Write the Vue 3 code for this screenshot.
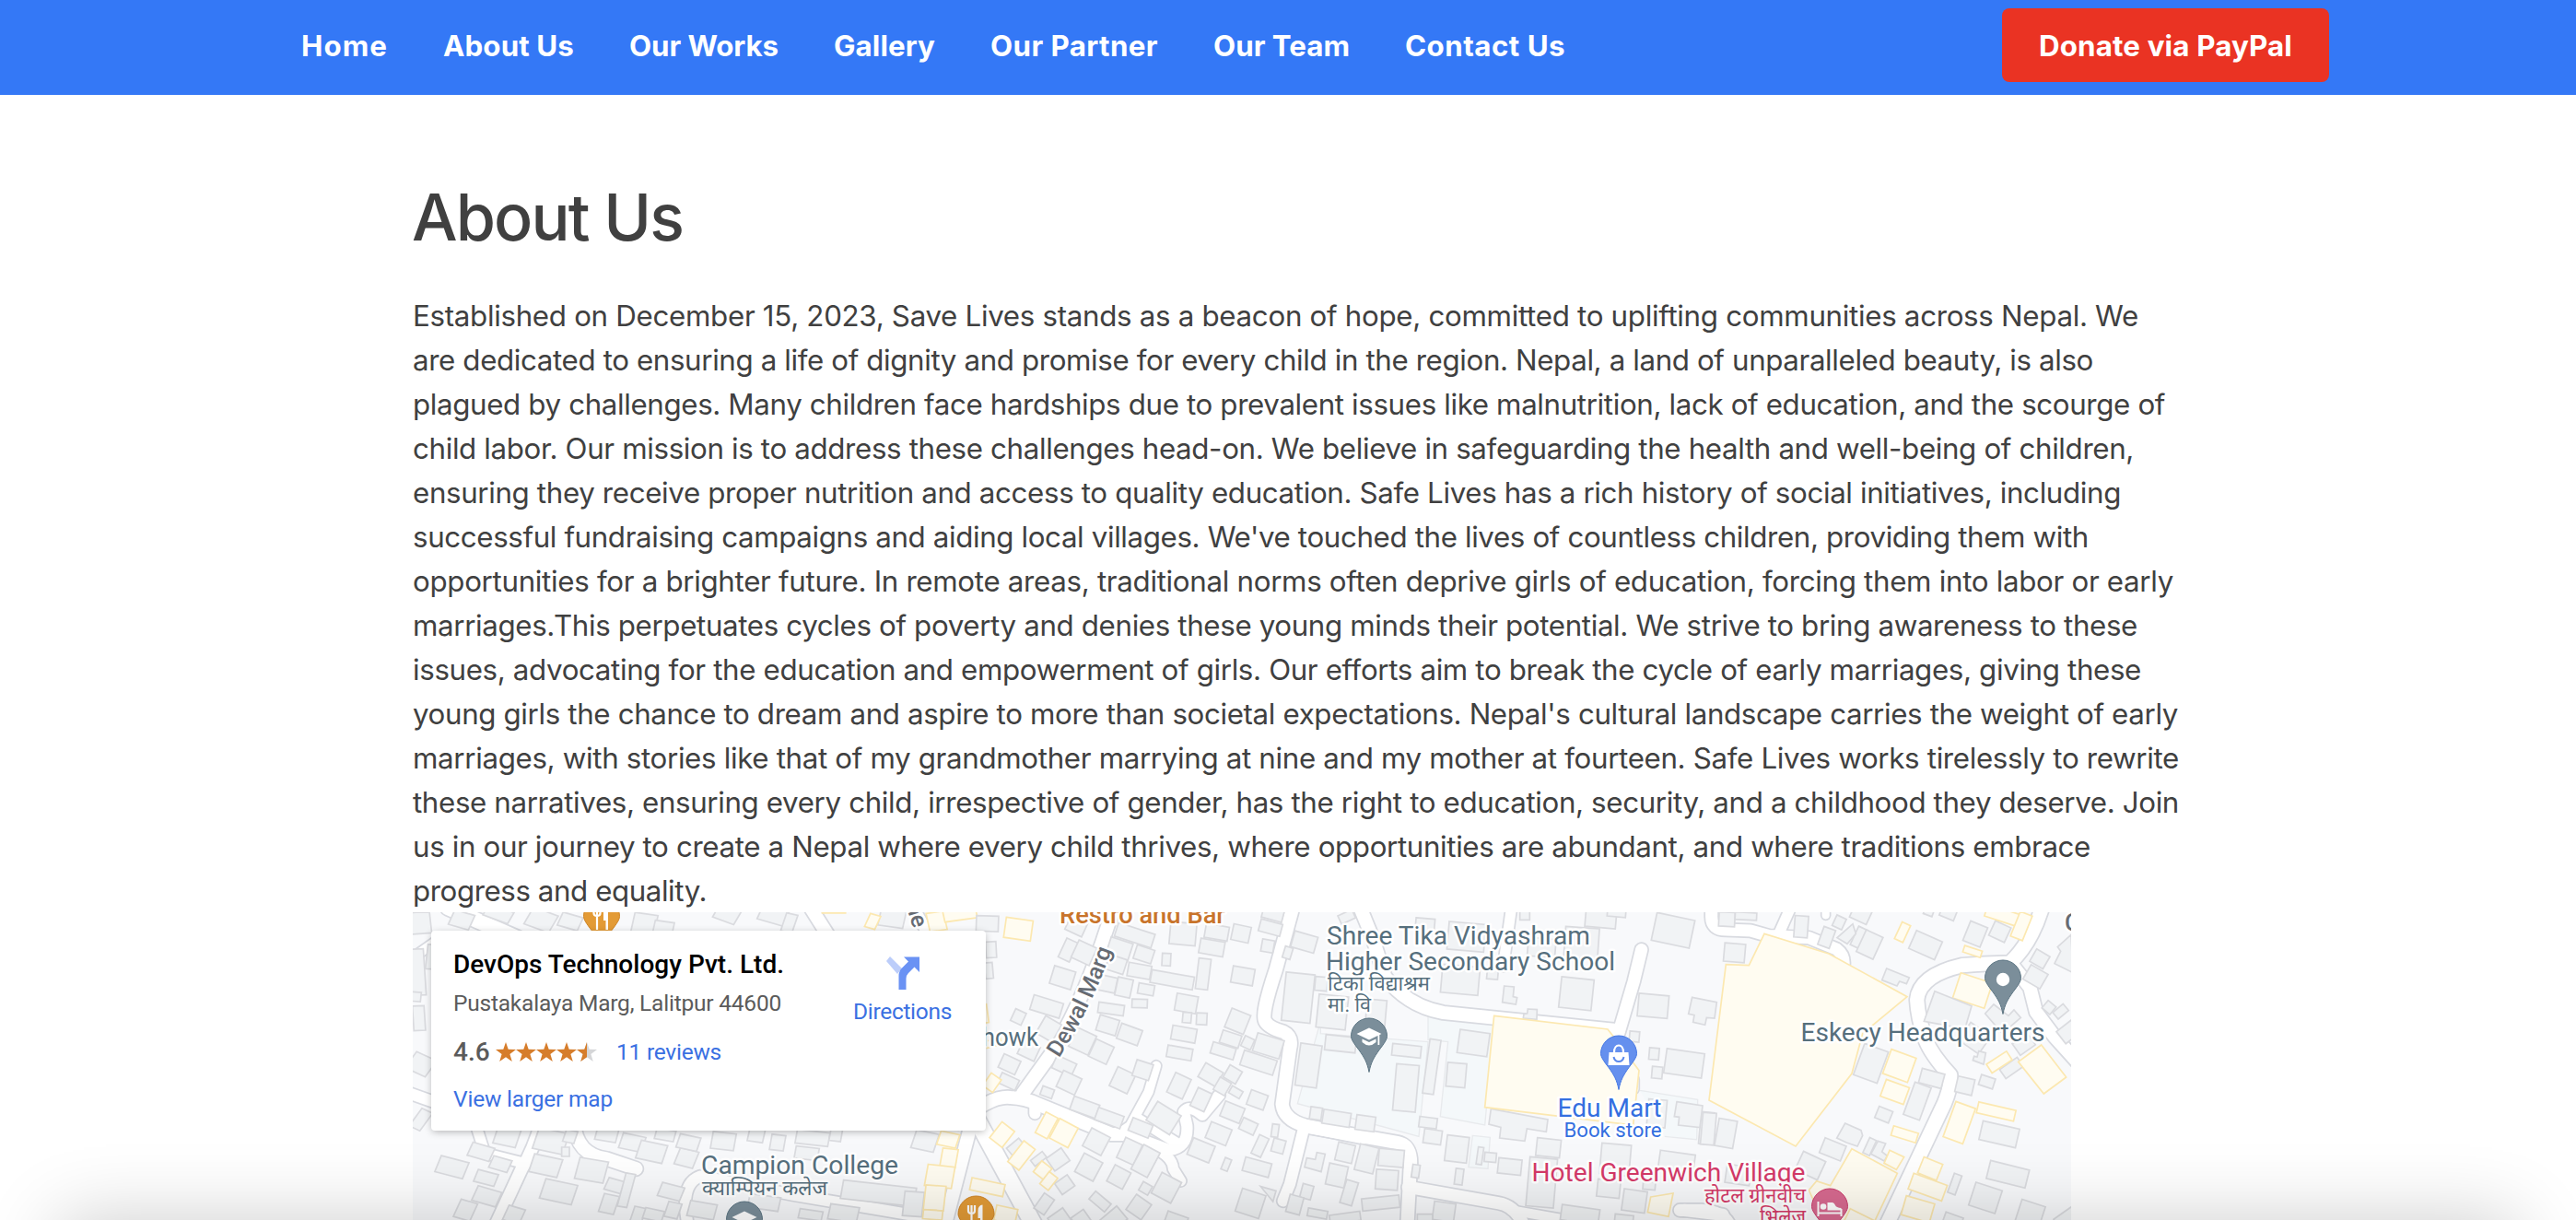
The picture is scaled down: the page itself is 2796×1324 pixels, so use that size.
<script setup>
// Spreads or tightens the letters of an element so that it fills a given width.
const vFit = {
  mounted(el, { value }) {
    const width = el.getBoundingClientRect().width
    el.style.letterSpacing = (value - width) / el.textContent.length + 'px'
  },
}

const nav = [
  ['Home', 94],
  ['About Us', 142],
  ['Our Works', 162],
  ['Gallery', 110],
  ['Our Partner', 182],
  ['Our Team', 148],
  ['Contact Us', 174],
]

const lines = [
  ['Established on December 15, 2023, Save Lives stands as a beacon of hope, committed to uplifting communities across Nepal. We', 1873],
  ['are dedicated to ensuring a life of dignity and promise for every child in the region. Nepal, a land of unparalleled beauty, is also', 1824],
  ['plagued by challenges. Many children face hardships due to prevalent issues like malnutrition, lack of education, and the scourge of', 1902],
  ['child labor. Our mission is to address these challenges head-on. We believe in safeguarding the health and well-being of children,', 1868],
  ['ensuring they receive proper nutrition and access to quality education. Safe Lives has a rich history of social initiatives, including', 1854],
  ["successful fundraising campaigns and aiding local villages. We've touched the lives of countless children, providing them with", 1819],
  ['opportunities for a brighter future. In remote areas, traditional norms often deprive girls of education, forcing them into labor or early', 1911],
  ['marriages.This perpetuates cycles of poverty and denies these young minds their potential. We strive to bring awareness to these', 1872],
  ['issues, advocating for the education and empowerment of girls. Our efforts aim to break the cycle of early marriages, giving these', 1876],
  ["young girls the chance to dream and aspire to more than societal expectations. Nepal's cultural landscape carries the weight of early", 1916],
  ['marriages, with stories like that of my grandmother marrying at nine and my mother at fourteen. Safe Lives works tirelessly to rewrite', 1917],
  ['these narratives, ensuring every child, irrespective of gender, has the right to education, security, and a childhood they deserve. Join', 1917],
  ['us in our journey to create a Nepal where every child thrives, where opportunities are abundant, and where traditions embrace', 1821],
  ['progress and equality.', 319],
]

// Map tiles. Roads are [width, path]; buildings are [cx, cy, w, h, angle].
const tiles = [
  {
    t: 'translate(440 985) scale(.42088 .33333)',
    roads: [
      [18, 'M110 0L290 100'], [16, 'M1040 -10L1090 90'], [15, 'M350 700Q330 790 300 850L230 1040'],
      [13, 'M180 700L205 800L300 830'], [16, 'M435 700Q440 805 520 818L595 850'], [14, 'M730 1040Q705 900 760 875L1000 935L1350 1010'],
      [16, 'M1460 700L1390 1040'], [14, 'M0 600L90 640'], [14, 'M1310 0L1350 90'], [12, 'M0 180L90 100'],
    ],
    grey: [
      [35, 50, 60, 70, -5], [145, 40, 55, 50, 20], [240, 20, 70, 40, 25], [350, 40, 70, 60, 25], [425, 45, 55, 45, 20], [615, 60, 60, 80, 10], [665, 70, 50, 50, 10], [830, 20, 60, 50, 25], [950, 20, 70, 60, 20], [990, 50, 30, 60, 15], [1255, 35, 65, 55, 10],
      [30, 210, 40, 150, -3], [25, 290, 30, 30, 5], [35, 360, 30, 80, -3], [40, 510, 60, 60, 30], [40, 690, 32, 66, 30], [65, 160, 20, 80, 5],
      [262, 745, 60, 60, 15], [195, 795, 60, 45, 20], [245, 835, 50, 40, 20], [120, 845, 75, 55, 18], [208, 880, 55, 40, 18], [375, 760, 80, 70, 15], [362, 840, 75, 60, 15], [413, 795, 20, 30, 0], [425, 745, 30, 40, 15], [480, 855, 75, 70, 12], [395, 925, 85, 65, 15], [210, 940, 65, 50, 20], [155, 985, 45, 60, 20], [280, 1000, 45, 50, 20], [540, 905, 45, 40, 20], [525, 965, 40, 60, 15], [570, 920, 25, 110, 12], [600, 1000, 30, 50, 15],
      [520, 735, 55, 50, 12], [585, 765, 60, 50, 15], [635, 795, 70, 60, 15], [670, 740, 50, 35, 12], [725, 815, 50, 55, 18], [730, 765, 55, 45, 15], [685, 925, 60, 45, 18], [640, 1000, 50, 35, 15], [690, 985, 35, 50, 15], [765, 985, 70, 50, 12], [925, 960, 80, 45, 10], [1045, 1000, 60, 30, 10], [1130, 995, 75, 50, 10], [960, 765, 36, 50, 8], [905, 740, 40, 45, 10], [1050, 750, 85, 45, 8], [1035, 800, 60, 40, 8], [1110, 740, 30, 40, 8], [820, 760, 60, 55, 8], [1340, 760, 60, 60, 15], [1220, 930, 190, 60, 8], [1310, 965, 50, 80, 5],
    ],
    yellow: [[1400, 755, 50, 45, 15], [1402, 815, 40, 60, 8], [1378, 875, 70, 70, 8], [1365, 945, 52, 80, 5], [1360, 1000, 50, 30, 5], [1205, 45, 28, 45, 20], [1370, 45, 45, 60, -10], [1430, 20, 85, 40, -10], [1105, 10, 60, 15, 0]],
    polys: [],
  },
  {
    t: 'translate(1060 985) scale(.33333)',
    roads: [
      [16, 'M450 -10L410 110Q330 340 240 480L150 605'], [16, 'M-60 700Q50 610 110 618Q160 620 200 640L440 738L480 738L620 790'],
      [14, 'M620 790Q690 785 685 710L675 665Q695 640 735 675L790 610'], [13, 'M470 735L600 795Q640 820 640 850L665 890'],
      [12, 'M585 515L560 600L500 710L460 738'], [13, 'M530 690L650 765'], [14, 'M190 640V670'],
      [16, 'M1035 -20L975 200Q925 350 940 370Q950 390 1000 405Q1030 420 1020 460L995 640Q1000 690 1070 710L1260 748'],
      [14, 'M1065 720L1020 900L998 955'], [20, 'M-10 670L190 1040'],
    ],
    grey: [
      [325, 60, 60, 50, 25], [298, 138, 40, 68, 25], [350, 147, 65, 62, 25], [280, 228, 72, 60, 17], [228, 322, 100, 50, 17], [136, 356, 38, 42, 25], [235, 395, 60, 65, 30], [345, 435, 70, 68, 25], [406, 469, 64, 62, 25], [515, 90, 125, 46, 18], [465, 135, 75, 60, 18], [545, 152, 60, 46, 18], [455, 185, 60, 50, 18], [618, 169, 28, 40, 3], [530, 206, 75, 44, 10], [637, 235, 140, 42, 10], [738, 216, 40, 100, 7], [672, 85, 85, 72, 5], [782, 80, 76, 46, 10], [766, 130, 80, 48, 10], [861, 84, 58, 52, 12], [867, 222, 72, 54, 10], [425, 248, 60, 50, 12], [480, 260, 50, 60, 12], [552, 266, 52, 34, 10], [531, 312, 50, 28, 2], [438, 330, 84, 34, 8], [427, 383, 66, 52, 17], [498, 413, 72, 52, 20], [683, 312, 70, 56, 10], [685, 358, 28, 34, 5], [733, 362, 34, 38, 3], [675, 412, 80, 46, 10], [661, 473, 82, 38, 10], [850, 370, 66, 66, 22], [827, 428, 64, 42, 18], [803, 466, 78, 38, 17], [883, 440, 34, 36, 25], [950, 450, 90, 62, 17], [918, 505, 112, 50, 18],
      [957, 65, 72, 40, 15], [965, 20, 68, 40, 15], [948, 125, 40, 40, 10], [1067, 112, 78, 54, 16], [1013, 147, 26, 38, 17], [1047, 293, 94, 158, 6], [1158, 340, 96, 108, 6], [1122, 248, 40, 45, 5], [1185, 443, 100, 50, 6], [1081, 514, 70, 138, 8], [1105, 670, 38, 40, 8], [1172, 686, 90, 46, 9],
      [107, 510, 60, 48, 25], [104, 566, 62, 36, 25], [170, 465, 60, 50, 25], [285, 515, 70, 45, 25], [301, 570, 66, 58, 25], [230, 601, 40, 30, 20], [352, 650, 88, 46, 20], [432, 685, 88, 42, 20], [475, 562, 64, 68, 25], [541, 529, 56, 54, 18], [659, 580, 56, 70, 25], [609, 685, 90, 72, 32], [534, 717, 70, 44, 22], [762, 544, 66, 52, 30], [834, 543, 46, 46, 30], [800, 582, 42, 46, 30], [844, 601, 40, 26, 30], [731, 625, 50, 64, 25], [833, 666, 68, 52, 22], [914, 626, 58, 50, 20], [885, 712, 52, 40, 25], [788, 736, 72, 56, 22], [731, 790, 76, 58, 22], [972, 726, 22, 42, 8], [923, 776, 34, 66, 25], [983, 776, 40, 44, 15], [913, 845, 88, 46, 15], [813, 836, 22, 40, 22], [892, 963, 80, 78, 18], [1075, 925, 36, 46, 15], [1036, 967, 46, 58, 15], [1110, 996, 64, 26, 10],
      [390, 762, 68, 66, 28], [498, 793, 60, 72, 25], [550, 825, 60, 90, 28], [365, 845, 68, 68, 28], [463, 877, 58, 60, 28], [618, 912, 72, 76, 28], [550, 914, 34, 32, 30], [287, 902, 50, 44, -35], [265, 820, 60, 50, -35], [202, 818, 48, 24, -38], [128, 780, 52, 34, -40], [220, 965, 40, 60, 35], [270, 1015, 60, 50, -35], [340, 1015, 50, 45, -35], [402, 957, 66, 34, 40], [447, 1015, 70, 55, -40], [528, 975, 60, 60, 35], [650, 1018, 70, 40, 20],
      [35, 52, 72, 50, 2], [47, 137, 34, 52, -3], [40, 205, 26, 52, -5],
    ],
    yellow: [[136, 70, 88, 66, 8], [228, 709, 44, 76, 28], [284, 734, 68, 72, 28], [83, 739, 52, 66, 38], [146, 807, 46, 86, 38], [215, 855, 42, 45, 38], [235, 890, 35, 50, 38], [35, 910, 110, 40, 12], [50, 570, 40, 50, 35], [95, 1000, 70, 50, 12], [30, 345, 12, 60, -8], [55, 440, 50, 22, -15]],
    polys: [
      ['grey', '925,908 975,922 965,957'], ['grey', '1075,815 1103,820 1108,797 1135,802 1122,860 1068,845'],
    ],
  },
  {
    t: 'translate(1440 985) scale(.33333)',
    roads: [
      [16, 'M105 -10L150 100L190 225Q260 320 380 342L950 400'], [13, 'M603 -10L575 190'], [15, 'M1025 137L1000 240L950 410'],
      [16, 'M-70 712L230 765Q280 775 272 850L262 1040'], [15, 'M265 910L560 962Q610 970 640 1030'], [12, 'M600 985L800 1020'], [15, 'M1165 985L1290 1000'], [12, 'M1000 560V590'],
    ],
    grey: [
      [320, 60, 62, 50, 5], [455, 95, 120, 90, 5], [830, 115, 110, 100, 4], [700, 130, 90, 60, 5], [645, 25, 32, 30, 0], [65, 30, 50, 30, -25], [435, 235, 122, 92, 5], [540, 215, 36, 36, 5], [813, 280, 106, 100, 6], [893, 30, 100, 70, 5], [945, 5, 60, 50, 5], [1128, 74, 126, 92, 12], [1063, 320, 98, 74, 5], [478, 441, 98, 76, 8], [258, 587, 74, 152, 5], [342, 518, 36, 178, 8], [260, 466, 94, 38, 6], [422, 545, 62, 78, 5], [1066, 476, 32, 38, 5], [1076, 537, 34, 38, 5], [1164, 507, 124, 80, 8], [1002, 420, 32, 34, 5], [126, 702, 62, 48, 8], [330, 700, 58, 34, 7], [345, 746, 58, 46, 8], [424, 786, 72, 84, 7], [722, 782, 78, 58, 6], [499, 808, 18, 56, 8], [533, 813, 38, 30, 5], [596, 843, 76, 50, 6], [431, 876, 26, 52, 7],
      [700, 895, 90, 160, 5], [940, 820, 96, 100, 5], [918, 915, 74, 56, 6], [1237, 718, 44, 104, 5], [1075, 670, 60, 90, 5], [1140, 825, 115, 55, 8], [1002, 955, 76, 70, 8], [60, 798, 56, 60, 13], [130, 818, 62, 86, 14], [210, 815, 82, 56, 5], [196, 886, 72, 64, 4], [33, 872, 62, 70, 12], [73, 928, 40, 78, 17], [290, 858, 24, 42, 8], [176, 962, 122, 40, -6], [60, 1010, 100, 30, -8], [382, 990, 70, 60, 8], [320, 1010, 50, 24, 0], [825, 1000, 124, 50, 8], [968, 1015, 60, 30, 6], [160, 350, 64, 100, 5], [1050, 905, 40, 26, 5],
    ],
    yellow: [],
    polys: [
      ['grey', '578,255 610,258 607,290 620,293 616,315 572,308'],
      ['grey', '535,655 720,690 715,730 652,720 645,760 563,750 567,715 528,705'],
      ['grey', '655,330 685,332 684,364 640,360 642,346 653,345'],
      ['yellow', '545,352 915,396 950,440 1017,530 998,708 515,650'],
      ['yellow', '1055,942 1128,930 1113,1006 1045,992'],
    ],
  },
  {
    t: 'translate(1820 985) scale(.33333)',
    roads: [
      [15, 'M113 -10V30Q113 72 160 72L240 75L300 92L430 98L520 135Q560 165 530 230'], [13, 'M330 90L375 -10'],
      [17, 'M1195 -20Q1160 110 1085 180Q1000 182 930 188Q790 220 782 300Q785 360 810 430Q830 480 890 545Q895 580 870 640L680 1040'],
      [16, 'M1095 190L1150 260L1170 340L1230 420L1320 520'], [15, 'M10 985H80Q150 990 170 1030'], [10, 'M485 0V25'],
    ],
    grey: [
      [163, 38, 52, 46, 3], [225, 28, 70, 24, 3], [188, 147, 68, 60, 5], [103, 720, 44, 104, 5], [160, 735, 60, 90, 10], [405, 62, 44, 70, 4], [488, 97, 40, 62, 20], [529, 48, 34, 38, 25], [600, 20, 60, 50, 25], [593, 97, 32, 66, 25], [628, 120, 60, 78, 25], [810, 122, 92, 64, 24], [972, 86, 60, 68, 22], [1052, 78, 56, 52, 25], [1182, 167, 50, 46, 30], [1168, 225, 64, 54, 30], [1212, 325, 34, 32, 40], [1250, 338, 44, 28, -40], [1275, 405, 60, 50, -38], [1130, 445, 60, 46, -35], [970, 425, 80, 70, 35],
      [632, 507, 82, 108, 20], [830, 556, 76, 48, 15], [783, 630, 56, 112, 20], [938, 580, 56, 52, 13], [1010, 567, 48, 34, 18], [674, 674, 48, 40, 22], [1050, 738, 122, 62, 13], [1078, 868, 130, 60, 14], [1005, 945, 90, 78, 18], [1150, 1000, 80, 80, 18], [905, 900, 26, 66, 20], [508, 787, 74, 52, 22], [435, 840, 80, 66, 25], [628, 778, 24, 54, 25], [1090, 522, 70, 36, -35], [1270, 1015, 70, 50, -35], [900, 1015, 60, 30, 20], [200, 870, 80, 60, 8], [885, 15, 50, 40, 22], [820, 15, 30, 20, 20],
    ],
    yellow: [[725, 515, 86, 84, 20], [710, 600, 80, 58, 20], [963, 270, 108, 86, 18], [735, 80, 30, 60, 25], [963, 143, 60, 22, 18], [1060, 25, 110, 40, 18], [1122, 60, 42, 86, 22], [1050, 503, 78, 34, -33], [920, 700, 68, 122, 20], [1040, 664, 124, 36, 13], [742, 738, 84, 32, 17], [825, 850, 66, 56, 22], [817, 910, 116, 54, 20], [785, 982, 96, 64, 16]],
    polys: [
      ['grey', '573,53 583,85 555,118 522,98'],
      ['grey', '50,292 130,308 123,360 97,358 92,382 53,373 57,350 38,346'],
      ['grey', '0,632 84,645 75,716 5,708 8,682 -8,680'],
      ['grey', '683,198 757,228 748,248 725,240 717,255 668,236'],
      ['grey', '840,272 960,320 938,395 805,370'],
      ['grey', '1032,315 1080,352 1098,333 1120,358 1060,410 1004,345'],
      ['grey', '983,467 1006,473 999,510 964,497 968,484 978,486'],
      ['grey', '548,702 600,725 605,742 588,777 553,765 521,750'],
      ['grey', '655,760 680,768 668,795 685,808 676,825 632,802'],
      ['grey', '1284,88 1240,128 1250,142 1230,182 1290,212'],
      ['yellow', '285,85 495,150 750,290 605,410 570,540 387,777 105,627 160,185 235,188'],
      ['yellow', '1187,447 1268,552 1195,606 1112,502'],
      ['yellow', '570,785 718,865 640,1030 480,1030 430,920 455,890 500,905'],
      ['yellow', '693,790 740,812 715,853 675,832'],
      ['yellow', '565,980 645,1020 540,1030'],
    ],
  },
]

// [text, x, baseline, width, colour class, size]
const labels = [
  ['Restro and Bar', 1150, 1001.5, 180, 'food', 27],
  ['Shree Tika Vidyashram', 1440, 1024.5, 286, 'slate', 27],
  ['Higher Secondary School', 1439, 1052.5, 314, 'slate', 27],
  ['टिका विद्याश्रम', 1441, 1075, 111, 'slate', 22],
  ['मा. वि', 1441, 1097.5, 47, 'slate', 22],
  ['Edu Mart', 1690.5, 1212, 113, 'shop', 27],
  ['Book store', 1697.5, 1234, 106, 'shop', 22.5],
  ['Hotel Greenwich Village', 1662.5, 1281.5, 297, 'hotel', 27],
  ['होटल ग्रीनवीच', 1850, 1304.5, 110, 'hotel', 22],
  ['भिलेज', 1910, 1327.5, 50, 'hotel', 22],
  ['Eskecy Headquarters', 1954.5, 1130, 265, 'slate', 27],
  ['Campion College', 761, 1273.5, 214, 'slate', 27],
  ['क्याम्पियन कलेज', 762, 1296.5, 136, 'slate', 22],
  ['Chowk', 1049, 1135, 78, 'slate', 27],
]

const rect = ([x, y, w, h, a]) => ({ x: x - w / 2, y: y - h / 2, width: w, height: h, transform: `rotate(${a} ${x} ${y})` })
const pin = 'M0 38.500C-2 28 -5 23 -11 14.500C-16 8 -19.500 3 -19.500 -.500A19.500 19.500 0 0 1 19.500 -.500C19.500 3 16 8 11 14.500C5 23 2 28 0 38.500Z'
const star = 'M11 0L13.700 7.800L22 8L15.400 13L17.800 21L11 16.200L4.200 21L6.600 13L0 8L8.300 7.800Z'
</script>

<template>
  <div class="page">
    <header class="bar">
      <nav class="links">
        <a v-for="[name, w] in nav" :key="name" v-fit="w">{{ name }}</a>
      </nav>
      <a class="donate"><span v-fit="275">Donate via PayPal</span></a>
    </header>

    <main class="content">
      <h1><span v-fit="294">About Us</span></h1>
      <p class="story">
        <span v-for="[text, w] in lines" :key="text" class="line"><span v-fit="w" class="run">{{ text }}</span></span>
      </p>

      <section class="map">
        <svg class="canvas" viewBox="448 990 1800 334" width="1800" height="334">
          <rect x="448" y="990" width="1800" height="334" fill="#f8f9fb" />
          <g class="campus" transform="translate(1440 985) scale(.33333)">
            <path d="M330 355L545 380L515 708L370 680L395 437L330 430Z" />
            <path d="M-20 370L-20 410L330 437L300 745L-95 638Z" />
            <path d="M475 742L532 748L525 850L462 845Z" />
            <path d="M1020 595L1208 625L1205 755L1100 745" />
          </g>
          <g v-for="(tile, i) in tiles" :key="'c' + i" :transform="tile.t" class="casing">
            <path v-for="(r, j) in tile.roads" :key="j" :d="r[1]" :stroke-width="r[0] + 1.6" />
          </g>
          <g v-for="(tile, i) in tiles" :key="'r' + i" :transform="tile.t" class="road">
            <path v-for="(r, j) in tile.roads" :key="j" :d="r[1]" :stroke-width="r[0] - 1.8" />
          </g>
          <g v-for="(tile, i) in tiles" :key="'b' + i" :transform="tile.t">
            <rect v-for="(b, j) in tile.grey" :key="'g' + j" v-bind="rect(b)" class="grey" />
            <rect v-for="(b, j) in tile.yellow" :key="'y' + j" v-bind="rect(b)" class="yellow" />
            <polygon v-for="(p, j) in tile.polys" :key="'p' + j" :points="p[1]" :class="p[0]" />
          </g>

          <g class="label">
            <text v-for="l in labels" :key="l[0]" :x="l[1]" :y="l[2]" :textLength="l[3]" lengthAdjust="spacingAndGlyphs" :class="l[4]" :font-size="l[5]">{{ l[0] }}</text>
            <path id="dewal" d="M1149.500 1148.500Q1184 1095 1207 1030" fill="none" />
            <text class="street" font-size="25"><textPath href="#dewal" textLength="131">Dewal Marg</textPath></text>
            <text class="street" font-size="25" transform="translate(983 982) rotate(72)">ne</text>
            <text class="street" font-size="26" x="2241" y="1010">C</text>
          </g>

          <g transform="translate(1486 1125)">
            <path :d="pin" class="pin-slate" />
            <path d="M-13.500 -3L0 -9.500L13.500 -3L0 3.500ZM-7.500 2.500L0 6L7.500 2.500V6Q0 13 -7.500 6ZM9.500 -2H11.300V9H9.500Z" fill="#fff" />
          </g>
          <g transform="translate(808 1324)">
            <path :d="pin" class="pin-slate" />
            <path d="M-13.500 -3L0 -9.500L13.500 -3L0 3.500Z" fill="#fff" />
          </g>
          <g transform="translate(2174 1062)">
            <path :d="pin" class="pin-slate" />
            <circle cx="0" cy="1" r="7.200" fill="#fff" />
          </g>
          <g transform="translate(1757 1144)">
            <path :d="pin" class="pin-shop" />
            <path d="M-10.500 -2H10.500L11.500 12H-11.500Z" fill="#fff" />
            <path d="M-5 -2C-5 -12 5 -12 5 -2" fill="none" stroke="#fff" stroke-width="2.200" />
            <path d="M-5.500 3Q-4.500 8 0 8Q4.500 8 5.500 3" fill="none" stroke="#5b89ec" stroke-width="2" />
          </g>
          <g transform="translate(1986 1310)">
            <path :d="pin" class="pin-hotel" />
            <path d="M-12.500 -6V10M12.500 10V2M-12.500 6.500H12.500" fill="none" stroke="#fff" stroke-width="2" />
            <circle cx="-7" cy="-.500" r="3.300" fill="#fff" />
            <path d="M-2.500 3.500V-5H3Q5 -4.500 6 -2Q7 .500 12.500 1V3.500Z" fill="#fff" />
          </g>
          <g v-for="[x, y] in [[653, 995], [1059.5, 1318]]" :key="x" :transform="`translate(${x} ${y})`">
            <path :d="pin" class="pin-food" />
            <path d="M-8.500 -10V-4Q-8.500 -1 -5 -1Q-1.500 -1 -1.500 -4V-10M-5 -10V14" fill="none" stroke="#fff" stroke-width="2.200" />
            <path d="M2 -4Q2 -10 7 -10.500V14H4.500V4H2Z" fill="#fff" />
          </g>
        </svg>

        <aside class="card">
          <div class="place">
            <strong class="name"><span v-fit="359">DevOps Technology Pvt. Ltd.</span></strong>
            <span class="address"><span v-fit="356">Pustakalaya Marg, Lalitpur 44600</span></span>
            <div class="rating">
              <b>4.6</b>
              <svg class="stars" width="110" height="22" viewBox="0 0 110 22">
                <path v-for="n in 4" :key="n" :d="star" :transform="`translate(${(n - 1) * 22} 0)`" fill="#d67d2b" />
                <path :d="star" transform="translate(88 0)" fill="#d5d6d8" />
                <path d="M99 0V16.200L92.200 21L94.600 13L88 8L96.300 7.800Z" fill="#d67d2b" />
              </svg>
              <a v-fit="114">11 reviews</a>
            </div>
            <a class="larger"><span v-fit="173">View larger map</span></a>
          </div>
          <div class="directions">
            <svg width="38" height="38" viewBox="0 0 38 38">
              <path d="M5 1L1 6L13 20L18 14Z" fill="#bccdfa" />
              <path d="M14.500 37V22Q14.500 17 18 13.500L25 6.500L20 1.500H37V18L31.500 12.500L25 19Q22.500 21.500 22.500 25V37Z" fill="#6a92f4" />
            </svg>
            <a v-fit="107">Directions</a>
          </div>
        </aside>
      </section>
    </main>

    <div class="shade"></div>
  </div>
</template>

<style>
html,
body {
  margin: 0;
  overflow: hidden;
  background: #fff;
}
</style>

<style scoped>
.page {
  position: relative;
  width: 2796px;
  height: 1324px;
  overflow: hidden;
  background: #fff;
  color: #404040;
  font-family: Inter, 'Liberation Sans', sans-serif;
  font-size: 31.3px;
}
.bar,
.story {
  font-variation-settings: 'opsz' 14;
}
.bar {
  box-sizing: border-box;
  display: flex;
  align-items: center;
  justify-content: space-between;
  height: 103px;
  padding: 9px 268px 14px 327px;
  background: #3478f6;
  color: #fff;
  font-weight: 700;
  white-space: nowrap;
}
.links {
  display: flex;
  gap: 60px;
  padding-top: 1px;
}
.donate {
  box-sizing: border-box;
  height: 80px;
  padding: 1px 40px 0;
  border-radius: 8px;
  background: #ea3323;
  line-height: 80px;
}
.donate span,
.run,
h1 span {
  display: inline-block;
  white-space: nowrap;
}
.content {
  padding-left: 448px;
}
h1 {
  margin: 91px 0 41px -1px;
  font-size: 70px;
  font-weight: 500;
  line-height: 84px;
}
.story {
  margin: 0;
  line-height: 48px;
}
.line {
  display: block;
  height: 48px;
}
.map {
  position: relative;
  width: 1800px;
  height: 334px;
  margin-top: -1px;
  overflow: hidden;
  font-family: Roboto, 'Liberation Sans', sans-serif;
}
.canvas {
  display: block;
}
.campus path {
  fill: #f4f8fa;
  stroke: #e8eaed;
  stroke-width: 4;
}
.casing path,
.road path {
  fill: none;
  stroke-linecap: round;
  stroke-linejoin: round;
  vector-effect: non-scaling-stroke;
}
.casing path {
  stroke: #d8dae0;
}
.road path {
  stroke: #fff;
}
.grey,
.yellow {
  stroke-width: 1.7;
  vector-effect: non-scaling-stroke;
}
.grey {
  fill: #f1f3f5;
  stroke: #dadbdf;
}
.yellow {
  fill: #fffcf1;
  stroke: #fce8b0;
}
.label text {
  font-family: Roboto, 'Noto Sans', sans-serif;
  paint-order: stroke;
  stroke: #fff;
  stroke-width: 5px;
  stroke-linejoin: round;
}
.slate {
  fill: #566f7d;
}
.food {
  fill: #c8742b;
  font-weight: 500;
}
.shop {
  fill: #346fe0;
}
.hotel {
  fill: #d53a69;
}
.street {
  fill: #666b73;
  font-weight: 500;
}
.pin-slate {
  fill: #7b8e9a;
  stroke: #5c7583;
}
.pin-shop {
  fill: #6590ee;
  stroke: #4678e4;
}
.pin-hotel {
  fill: #d86a90;
  stroke: #cc3f6f;
}
.pin-food {
  fill: #e39b36;
  stroke: #cf8526;
}
.card {
  position: absolute;
  top: 20px;
  left: 20px;
  box-sizing: border-box;
  display: flex;
  justify-content: space-between;
  width: 602px;
  height: 217px;
  padding: 19px 37px 0 24px;
  border-radius: 4px;
  background: #fff;
  box-shadow: 0 2px 8px -1px rgba(0, 0, 0, 0.3);
  font-size: 24.5px;
  white-space: nowrap;
}
.place,
.directions {
  display: flex;
  flex-direction: column;
}
.place > * {
  display: flex;
}
.name {
  color: #000;
  font-size: 28px;
  font-weight: 500;
  line-height: 36px;
}
.address {
  margin-top: 8px;
  color: #5b5b5b;
  line-height: 32px;
}
.rating {
  align-items: center;
  margin-top: 19px;
  line-height: 36px;
}
.rating b {
  width: 46px;
  color: #5b5b5b;
  font-size: 28px;
  font-weight: 500;
}
.stars {
  margin-right: 21px;
}
.card a {
  color: #3a70e2;
}
.larger {
  margin-top: 17px;
  line-height: 32px;
}
.directions {
  align-items: center;
  padding-top: 8px;
}
.directions a {
  margin-top: 7px;
  line-height: 32px;
}
.shade {
  position: absolute;
  top: 1324px;
  right: 64px;
  left: 64px;
  height: 300px;
  box-shadow: 0 0 78px rgba(0, 0, 0, 0.2);
}
</style>
